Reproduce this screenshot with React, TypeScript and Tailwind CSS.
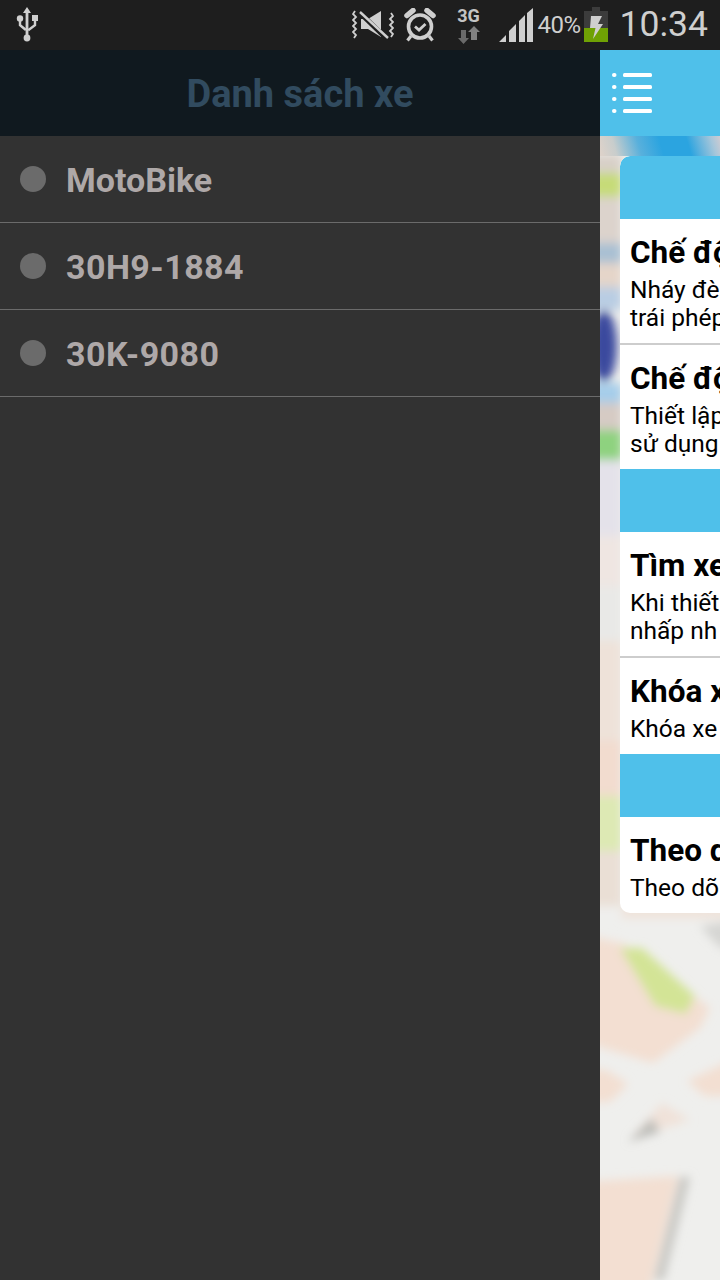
import React from "react";

const Usb = () => (
  <svg width="24" height="36" viewBox="0 0 24 36" className="ml-[15px]" fill="#cfcfcf">
    <path d="M12 0l4 6h-2.600v23h-2.800V6H8z" />
    <circle cx="12" cy="31" r="3.400" />
    <circle cx="5" cy="11.500" r="3.200" />
    <rect x="17" y="8" width="6" height="6" />
    <path d="M3.800 14h2.400v3.500l5.500 4.500-1.600 1.900-6.300-5.200zM18.800 14h2.400v4.700l-7.300 5.600-1.400-2 6.300-4.700z" />
  </svg>
);

const Mute = () => (
  <svg width="42" height="30" viewBox="0 0 42 30" fill="none">
    <path d="M3 1l-2 3 3 3-3 3 3 3-3 3 3 3-3 3 3 3-2 3" stroke="#cfcfcf" strokeWidth="1.800" />
    <path d="M39 3l2 3-3 3 3 3-3 3 3 3-3 3 3 3-2 3" stroke="#cfcfcf" strokeWidth="1.800" />
    <path d="M9 9h7L29 1v26L16 19H9z" fill="#cfcfcf" />
    <path d="M6 1l30 29" stroke="#1e1e1e" strokeWidth="5" />
    <path d="M8 2l28 26" stroke="#cfcfcf" strokeWidth="2.400" />
  </svg>
);

const Alarm = () => (
  <svg width="32" height="34" viewBox="0 0 32 34" fill="none">
    <circle cx="16" cy="18.500" r="11.500" stroke="#cfcfcf" strokeWidth="3.600" />
    <path d="M3 7.500L9 2.500M29 7.500L23 2.500" stroke="#cfcfcf" strokeWidth="5.500" strokeLinecap="round" />
    <path d="M7 28l-3.500 4.500M25 28l3.500 4.500" stroke="#cfcfcf" strokeWidth="3.200" />
    <path d="M11 18.500l4 3.500 6.500-6" stroke="#cfcfcf" strokeWidth="2.800" />
  </svg>
);

const Net = () => (
  <div className="flex flex-col items-center w-[26px] ml-[20px]">
    <span className="text-[18px] leading-[18px] font-bold text-[#c4c4c4]">3G</span>
    <svg width="24" height="18" viewBox="0 0 24 18" fill="#6a6a6a" className="mt-[1px]">
      <path d="M4 4h5v8h3l-5.500 6L1 12h3z" />
      <path d="M14 14V6h-3l6-6 6 6h-3v8z" fill="#808080" />
    </svg>
  </div>
);

const Signal = () => (
  <svg width="34" height="34" viewBox="0 0 34 34" fill="#cfcfcf" className="ml-[17px]">
    <path d="M0 34l7-7v7zM10 34V23l7-7v18zM20 34V13l6-6v27zM28 34V5l6-5v34z" />
  </svg>
);

const Battery = () => (
  <svg width="24" height="36" viewBox="0 0 24 36" className="ml-[3px]">
    <rect x="8" y="0" width="8" height="4" fill="#3c3c3c" />
    <rect x="0" y="4" width="24" height="17" fill="#3c3c3c" />
    <rect x="0" y="21" width="24" height="14" fill="#6fa104" />
    <path d="M7 9h11l-4 8h5L9 32l2.500-11H6z" fill="#cfcfcf" />
  </svg>
);

const MenuIcon = () => (
  <svg width="42" height="42" viewBox="0 0 42 42" fill="#fff">
    {[0, 12, 24, 36].map((y) => (
      <g key={y}>
        <rect x="1" y={y + 1} width="4.500" height="4" rx="2" />
        <rect x="12" y={y + 1} width="29" height="4" rx="1.500" />
      </g>
    ))}
  </svg>
);

const BlurMap = () => (
  <svg className="absolute inset-0" width="120" height="1144" viewBox="0 0 120 1144">
    <defs>
      <filter id="b" x="-40%" y="-40%" width="180%" height="180%">
        <feGaussianBlur stdDeviation="5" />
      </filter>
      <linearGradient id="st" gradientUnits="userSpaceOnUse" x1="4" y1="26" x2="118" y2="-8">
        <stop offset="0" stopColor="#dcd2ca" />
        <stop offset="0.12" stopColor="#c8cdcc" />
        <stop offset="0.32" stopColor="#58b0dc" />
        <stop offset="0.5" stopColor="#2ba4e0" />
        <stop offset="0.72" stopColor="#2ba4e0" />
        <stop offset="0.92" stopColor="#a6c6da" />
        <stop offset="1" stopColor="#d0ccd2" />
      </linearGradient>
    </defs>
    <rect width="120" height="1144" fill="#efefed" />
    <g filter="url(#b)">
      <rect x="-20" y="18" width="42" height="20" fill="#d8d0c8" />
      <rect x="-20" y="37" width="42" height="24" fill="#c6db78" />
      <rect x="-20" y="61" width="42" height="46" fill="#dcd3cc" />
      <rect x="-20" y="107" width="42" height="20" fill="#a9c0d3" />
      <rect x="-20" y="127" width="42" height="24" fill="#e5d5c9" />
      <rect x="-20" y="151" width="42" height="23" fill="#b9cde3" />
      <rect x="-20" y="247" width="42" height="20" fill="#a6cdea" />
      <rect x="-20" y="267" width="42" height="27" fill="#d6cbc4" />
      <rect x="-20" y="294" width="42" height="30" fill="#8ed27f" />
      <rect x="-20" y="324" width="42" height="76" fill="#e4e2ea" />
      <ellipse cx="4" cy="210" rx="13" ry="36" fill="#3b4a9e" />
      <rect x="-20" y="400" width="42" height="50" fill="#efe6e2" />
      <rect x="-20" y="450" width="42" height="55" fill="#e9e9e7" />
      <rect x="-20" y="505" width="42" height="100" fill="#eee2d9" />
      <rect x="-20" y="605" width="42" height="55" fill="#f2dccf" />
      <rect x="-20" y="660" width="42" height="55" fill="#dde9b4" />
      <rect x="-20" y="715" width="42" height="55" fill="#eadfd5" />
      <rect x="22" y="770" width="110" height="12" fill="#efe2d9" />
      <path d="M100 790L130 785V815L118 810Z" fill="#d6d6d3" />
      <path d="M-20 798L25 808 110 872 100 892 53 927-20 905Z" fill="#f3dfd2" />
      <path d="M20 812L42 812 95 860 86 878 55 870Z" fill="#d3e496" />
      <path d="M-20 930L8 935 28 948 10 966-20 966Z" fill="#f3dfd2" />
      <path d="M130 925L87 945 105 960 130 960Z" fill="#f3dfd2" />
      <path d="M33 1000L62 967 90 984 58 994Z" fill="#f0e2d9" />
      <path d="M28 1006L52 982 60 996Z" fill="#bcbcb8" />
      <path d="M80 1041L54 1144 64 1144 90 1041Z" fill="#c8c7c3" />
      <path d="M-20 1046L78 1040 48 1160H-20Z" fill="#f3dfd2" />
    </g>
    <rect width="120" height="20" fill="url(#st)" />
  </svg>
);

const Item = ({ title, lines, divider }: { title: string; lines: string[]; divider?: boolean }) => (
  <div className={divider ? "border-b-2 border-[#cdcdcd] pl-[10px] pt-[15px] pb-[11px]" : "pl-[10px] pt-[15px] pb-[11px]"}>
    <div className="text-[31.500px] leading-[38px] font-bold text-black whitespace-nowrap mb-[4px]">{title}</div>
    {lines.map((l) => (
      <div key={l} className="text-[24.500px] leading-[28px] text-black whitespace-nowrap">{l}</div>
    ))}
  </div>
);

const Band = ({ top }: { top?: boolean }) => (
  <div className={top ? "h-[63px] bg-[#4fc0ea] rounded-t-[10px]" : "h-[63px] bg-[#4fc0ea]"} />
);

const Row = ({ name, digits }: { name: string; digits?: boolean }) => (
  <div className="h-[87px] border-b border-[#6b6b6b] flex pl-[20px]">
    <div className="w-[26px] h-[26px] rounded-full bg-[#6b6b6b] mt-[30px]" />
    <div className={digits ? "ml-[20px] mt-[22px] text-[34px] leading-[44px] font-bold text-[#aea8a8] tracking-[0.45px]" : "ml-[20px] mt-[22px] text-[34px] leading-[44px] font-bold text-[#aea8a8]"}>{name}</div>
  </div>
);

export default function App() {
  return (
    <div className="w-[720px] h-[1280px] overflow-hidden flex flex-col bg-[#323232] font-['Roboto',sans-serif]">
      <div className="h-[50px] shrink-0 bg-[#1e1e1e] flex items-center">
        <Usb />
        <div className="flex-1" />
        <Mute />
        <div className="ml-[10px]"><Alarm /></div>
        <Net />
        <Signal />
        <span className="ml-[5px] text-[24px] text-[#cfcfcf] tracking-[-0.5px]">40%</span>
        <Battery />
        <span className="ml-[12px] mr-[12px] text-[35.500px] text-[#cfcfcf]">10:34</span>
      </div>
      <div className="flex flex-1 min-h-0">
        <div className="w-[600px] shrink-0 flex flex-col bg-[#323232]">
          <div className="h-[86px] bg-[#10191f] flex items-center justify-center pt-[2px] text-[38px] font-bold text-[#314b5f]">
            Danh sách xe
          </div>
          <Row name="MotoBike" />
          <Row name="30H9-1884" digits />
          <Row name="30K-9080" digits />
        </div>
        <div className="w-[120px] shrink-0 flex flex-col overflow-hidden">
          <div className="h-[86px] shrink-0 bg-[#4fc0ea] flex items-center pl-[11px]">
            <MenuIcon />
          </div>
          <div className="relative flex-1 min-h-0 overflow-hidden pt-[20px] pl-[20px]">
            <BlurMap />
            <div className="relative w-[480px] bg-white rounded-[10px] overflow-hidden">
              <Band top />
              <Item divider title="Chế độ báo động" lines={["Nháy đèn, hú còi khi xe bị", "trái phép"]} />
              <Item title="Chế độ an toàn" lines={["Thiết lập chế độ khi không", "sử dụng xe"]} />
              <Band />
              <Item divider title="Tìm xe" lines={["Khi thiết bị ở gần xe,", "nhấp nh"]} />
              <Item title="Khóa xe" lines={["Khóa xe từ xa"]} />
              <Band />
              <Item title="Theo dõi xe" lines={["Theo dõi vị trí xe"]} />
            </div>
          </div>
        </div>
      </div>
    </div>
  );
}
